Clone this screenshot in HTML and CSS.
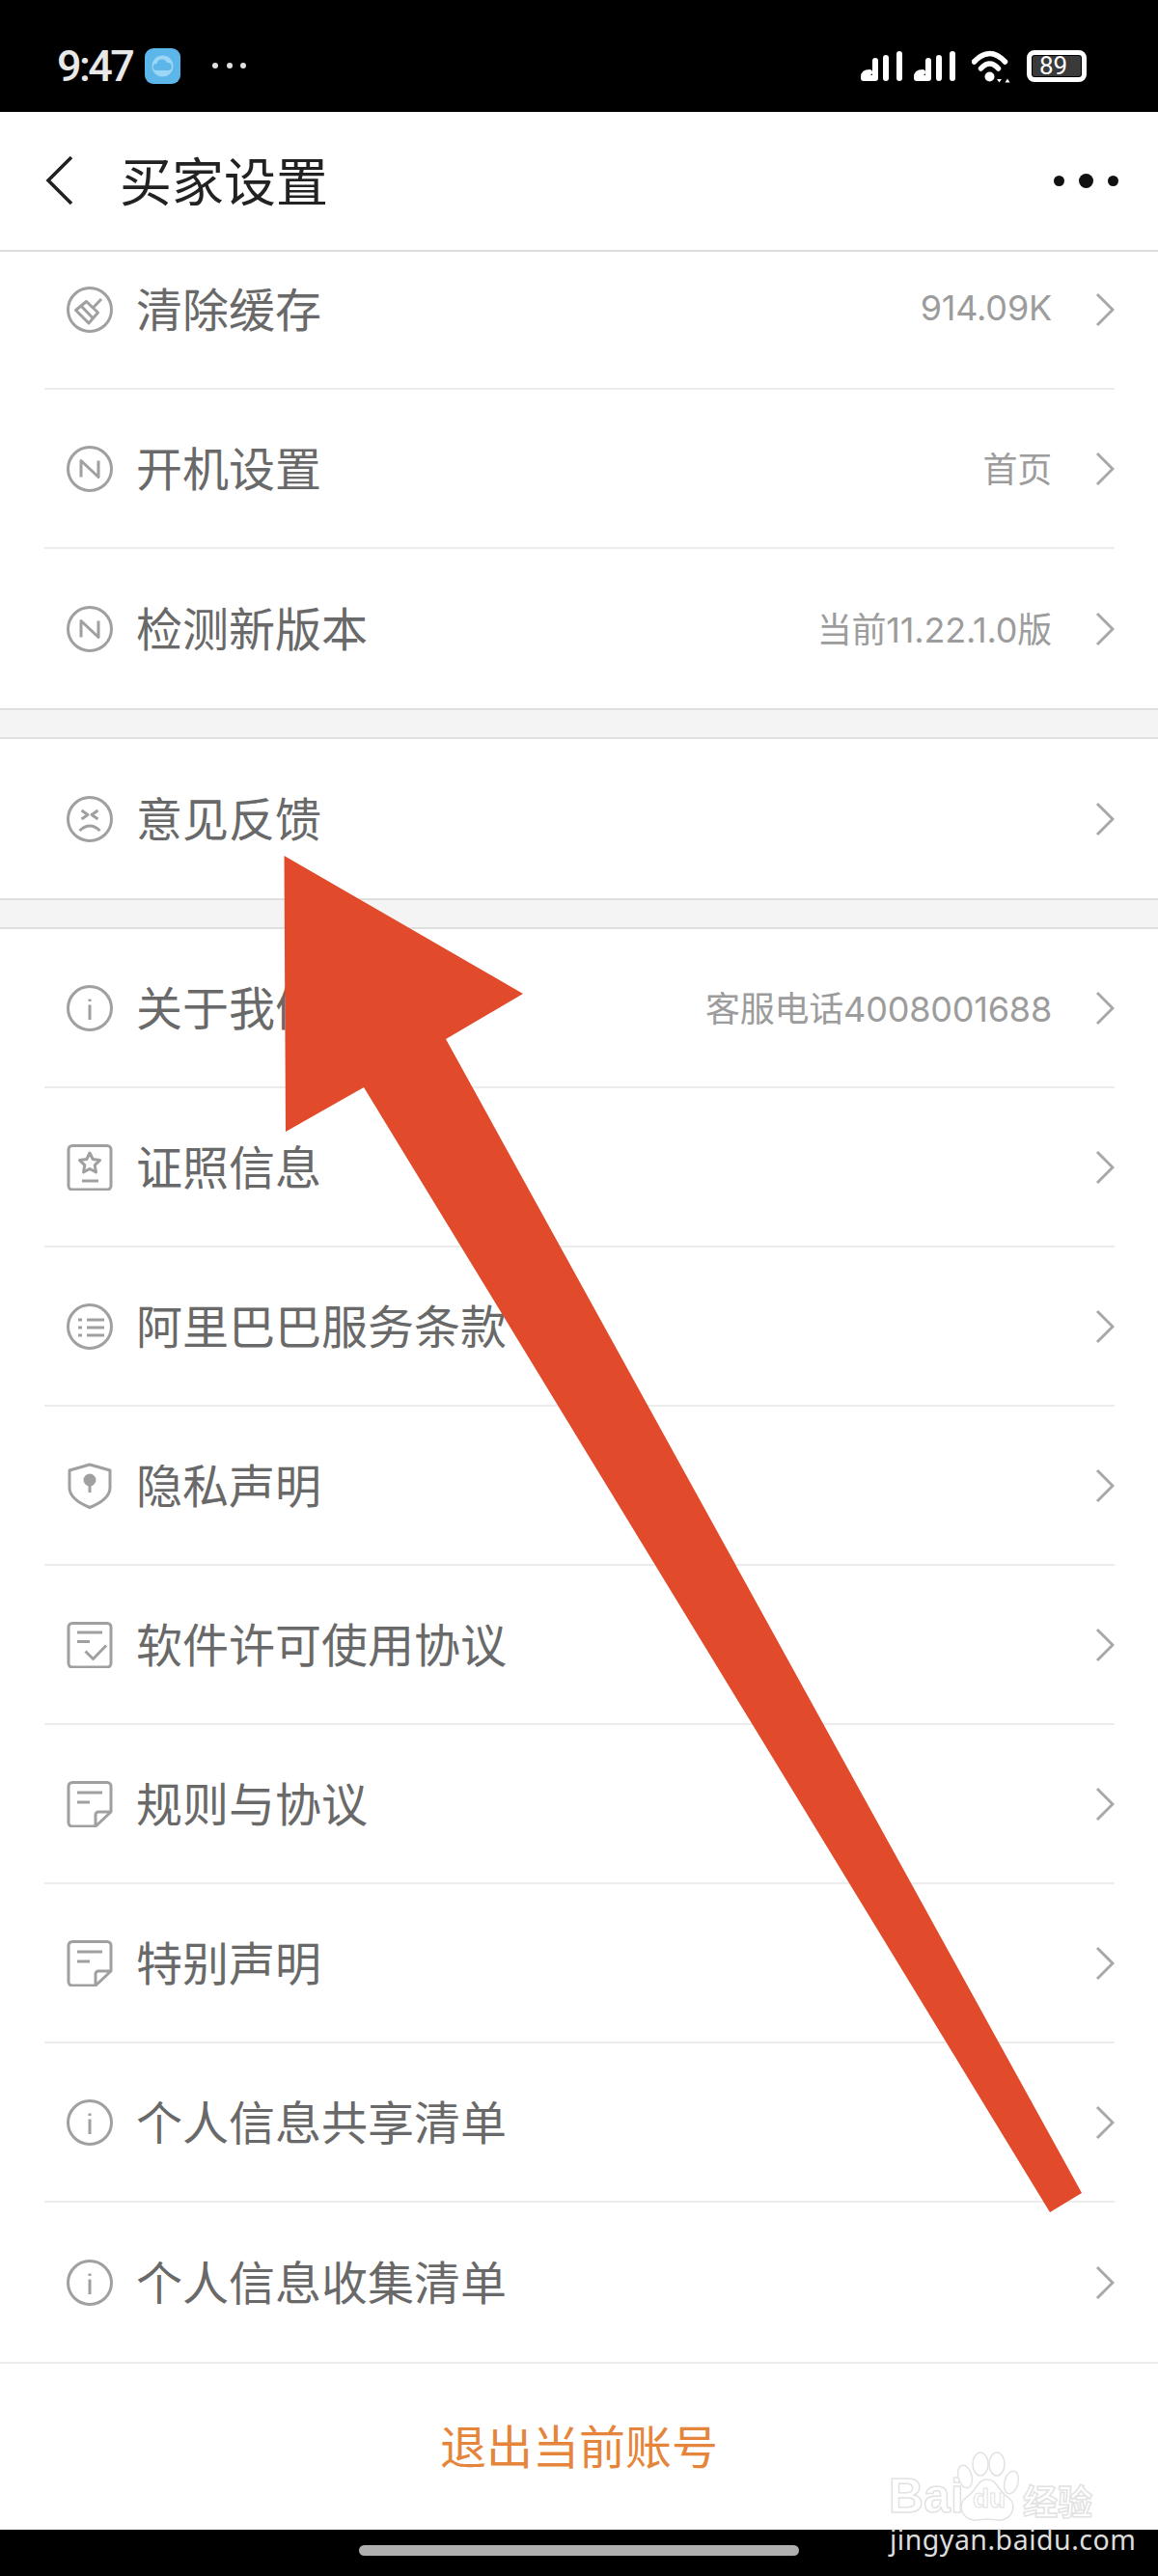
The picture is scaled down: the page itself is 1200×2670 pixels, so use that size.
FILE: index.html
```html
<!DOCTYPE html>
<html lang="zh-CN">
<head>
    <meta charset="UTF-8">
    <meta name="viewport" content="width=device-width, initial-scale=1.0">
    <title>买家设置</title>
    <link rel="stylesheet" href="styles.css">
</head>
<body>

    <!-- shared icons -->
    <svg class="defs" width="0" height="0">
        <defs>
            <symbol id="ic-chevron" viewBox="0 0 20 36">
                <path d="M2 2L18 18L2 34"/>
            </symbol>
            <symbol id="ic-broom" viewBox="0 0 48 48">
                <circle cx="24" cy="24" r="22.500"/>
                <path d="M36 13L28.300 21M20.500 15.500L32.500 27L23 38L9.500 24.500ZM15 20L27 32.500"/>
            </symbol>
            <symbol id="ic-n" viewBox="0 0 48 48">
                <circle cx="24" cy="24" r="22.500"/>
                <path d="M15 32.500V15.500L33 32.500V15.500"/>
            </symbol>
            <symbol id="ic-sad" viewBox="0 0 48 48">
                <circle cx="24" cy="24" r="22.500"/>
                <path d="M15.500 15L22 19.500L15.500 24M32.500 15L26 19.500L32.500 24M13.500 36Q24 26 34.500 36"/>
            </symbol>
            <symbol id="ic-info" viewBox="0 0 48 48">
                <circle cx="24" cy="24" r="22.500"/>
                <path d="M24 20.500V36M24 14.500V17"/>
            </symbol>
            <symbol id="ic-cert" viewBox="0 0 48 48">
                <rect x="2" y="1.500" width="44" height="45.500" rx="4"/>
                <path d="M24 9L27.200 15.500L34.500 16.600L29.200 21.700L30.500 28.900L24 25.500L17.500 28.900L18.800 21.700L13.500 16.600L20.800 15.500ZM16 38H33"/>
            </symbol>
            <symbol id="ic-list" viewBox="0 0 48 48">
                <circle cx="24" cy="24" r="22.500"/>
                <path d="M12 17H16M21 17H39M12 25H16M21 25H39M12 33H16M21 33H39"/>
            </symbol>
            <symbol id="ic-shield" viewBox="0 0 48 48">
                <path d="M24 2L45 8V26C45 35 35 42 24 46.500C13 42 3 35 3 26V8Z"/>
                <path d="M24 18V31"/>
                <circle class="solid" cx="24" cy="18" r="5"/>
            </symbol>
            <symbol id="ic-check" viewBox="0 0 48 48">
                <rect x="2" y="1.500" width="44" height="45.500" rx="4"/>
                <path d="M11 11H37M11 20.500H24M19.500 30.500L27.500 38.500L41 24.500"/>
            </symbol>
            <symbol id="ic-doc" viewBox="0 0 48 48">
                <path d="M30 47H6A4 4 0 0 1 2 43V5.500A4 4 0 0 1 6 1.500H42A4 4 0 0 1 46 5.500V32ZM46 32H33A3 3 0 0 0 30 35V47M11 12H37M11 22H24"/>
            </symbol>
        </defs>
    </svg>

    <!-- Status bar -->
    <div class="status-bar">
        <span class="time">9:47</span>
        <svg class="app-badge" viewBox="0 0 37 37">
            <rect width="37" height="37" rx="9" fill="#5cb6ea"/>
            <circle cx="18.500" cy="18.500" r="11" fill="#9bd6f5"/>
            <path d="M12 23a3.500 3.500 0 0 1 .5-7a5.500 5.500 0 0 1 10.500-1a4 4 0 0 1 1.500 8z" fill="#5cb6ea"/>
        </svg>
        <div class="status-dots"><i></i><i></i><i></i></div>

        <div class="status-right">
            <svg class="signal" viewBox="0 0 43 31">
                <path d="M3 28H15V10M3 27Q3 22 9 22"/>
                <path d="M26 7V28M40 3V28"/>
            </svg>
            <svg class="signal" viewBox="0 0 43 31">
                <path d="M3 28H15V10M3 27Q3 22 9 22"/>
                <path d="M26 7V28M40 3V28"/>
            </svg>
            <svg class="wifi" viewBox="0 0 40 36">
                <path d="M2.500 14Q18.500-3 34.500 14M9.500 21Q18.500 11 27.500 21"/>
                <circle cx="18.500" cy="29.500" r="5"/>
                <path class="tiny" d="M26 32h5l-2.500 3.500zM34.500 35.500l2.500-4l2.500 4z"/>
            </svg>
            <div class="battery"><span>89</span></div>
        </div>
    </div>

    <!-- Header -->
    <div class="top-bar">
        <svg class="back" viewBox="0 0 29 52"><path d="M27 2L3 26L27 50"/></svg>
        <h1>买家设置</h1>
        <div class="more"><i></i><i class="big"></i><i></i></div>
    </div>

    <div class="settings">
        <div class="group group-first">
            <div class="row">
                <svg class="icon"><use href="#ic-broom"/></svg>
                <span class="label">清除缓存</span>
                <span class="value">914.09K</span>
                <svg class="chevron"><use href="#ic-chevron"/></svg>
            </div>
            <div class="row">
                <svg class="icon"><use href="#ic-n"/></svg>
                <span class="label">开机设置</span>
                <span class="value">首页</span>
                <svg class="chevron"><use href="#ic-chevron"/></svg>
            </div>
            <div class="row">
                <svg class="icon"><use href="#ic-n"/></svg>
                <span class="label">检测新版本</span>
                <span class="value">当前11.22.1.0版</span>
                <svg class="chevron"><use href="#ic-chevron"/></svg>
            </div>
        </div>

        <div class="group-gap"></div>

        <div class="group">
            <div class="row">
                <svg class="icon"><use href="#ic-sad"/></svg>
                <span class="label">意见反馈</span>
                <svg class="chevron"><use href="#ic-chevron"/></svg>
            </div>
        </div>

        <div class="group-gap"></div>

        <div class="group">
            <div class="row">
                <svg class="icon"><use href="#ic-info"/></svg>
                <span class="label">关于我们</span>
                <span class="value">客服电话4008001688</span>
                <svg class="chevron"><use href="#ic-chevron"/></svg>
            </div>
            <div class="row">
                <svg class="icon"><use href="#ic-cert"/></svg>
                <span class="label">证照信息</span>
                <svg class="chevron"><use href="#ic-chevron"/></svg>
            </div>
            <div class="row">
                <svg class="icon"><use href="#ic-list"/></svg>
                <span class="label">阿里巴巴服务条款</span>
                <svg class="chevron"><use href="#ic-chevron"/></svg>
            </div>
            <div class="row">
                <svg class="icon"><use href="#ic-shield"/></svg>
                <span class="label">隐私声明</span>
                <svg class="chevron"><use href="#ic-chevron"/></svg>
            </div>
            <div class="row">
                <svg class="icon"><use href="#ic-check"/></svg>
                <span class="label">软件许可使用协议</span>
                <svg class="chevron"><use href="#ic-chevron"/></svg>
            </div>
            <div class="row">
                <svg class="icon"><use href="#ic-doc"/></svg>
                <span class="label">规则与协议</span>
                <svg class="chevron"><use href="#ic-chevron"/></svg>
            </div>
            <div class="row">
                <svg class="icon"><use href="#ic-doc"/></svg>
                <span class="label">特别声明</span>
                <svg class="chevron"><use href="#ic-chevron"/></svg>
            </div>
            <div class="row">
                <svg class="icon"><use href="#ic-info"/></svg>
                <span class="label">个人信息共享清单</span>
                <svg class="chevron"><use href="#ic-chevron"/></svg>
            </div>
            <div class="row">
                <svg class="icon"><use href="#ic-info"/></svg>
                <span class="label">个人信息收集清单</span>
                <svg class="chevron"><use href="#ic-chevron"/></svg>
            </div>
        </div>
    </div>

    <div class="logout"><span>退出当前账号</span></div>

    <!-- Navigation bar -->
    <div class="nav-bar"><div class="home-pill"></div></div>

    <!-- Annotation arrow drawn over the screenshot -->
    <svg class="arrow" viewBox="0 0 1200 2670">
        <polygon points="294.500,887 542,1030 462,1077 1121,2273 1088,2293 377,1127 296,1173"/>
    </svg>

    <!-- Watermark -->
    <div class="watermark">
        <span class="wm-bai">Bai</span>
        <svg class="wm-paw" viewBox="0 0 70 80">
            <ellipse cx="12" cy="27" rx="7" ry="12" transform="rotate(-15 12 27)"/>
            <ellipse cx="28" cy="14" rx="8" ry="12"/>
            <ellipse cx="45" cy="14" rx="8" ry="12"/>
            <ellipse cx="60" cy="33" rx="7" ry="12" transform="rotate(15 60 33)"/>
            <path d="M35 30C46 30 46 42 56 48C68 56 60 74 46 72C38 71 32 71 24 72C10 74 2 56 14 48C24 42 24 30 35 30Z"/>
        </svg>
        <span class="wm-du">du</span>
        <span class="wm-jy">经验</span>
        <span class="wm-url">jingyan.baidu.com</span>
    </div>

</body>
</html>
```

FILE: styles.css
```css
* {
    box-sizing: border-box;
}
body {
    margin: 0;
    width: 1200px;
    height: 2670px;
    position: relative;
    overflow: hidden;
    background-color: #ffffff;
    font-family: "Noto Sans CJK SC", "Noto Sans", sans-serif;
}
.defs {
    position: absolute;
}
i {
    display: block;
}

/* status bar */
.status-bar {
    height: 116px;
    background-color: #000000;
    display: flex;
    align-items: center;
    padding: 20px 74px 0 59px;
    color: #e8e8e8;
}
.time {
    font-family: Roboto, sans-serif;
    font-size: 45px;
    font-weight: 500;
    letter-spacing: -2.600px;
    width: 91px;
    line-height: 1;
}
.app-badge {
    width: 37px;
    height: 37px;
}
.status-dots {
    display: flex;
    gap: 8.500px;
    margin-left: 33px;
}
.status-dots i {
    width: 6px;
    height: 6px;
    border-radius: 50%;
    background-color: #e0e0e0;
}
.status-right {
    margin-left: auto;
    display: flex;
    align-items: center;
}
.signal {
    width: 43px;
    height: 31px;
    margin-right: 12px;
    fill: none;
    stroke: #ffffff;
    stroke-width: 6;
    stroke-linecap: round;
    stroke-linejoin: round;
}
.wifi {
    width: 40px;
    height: 36px;
    margin: 0 17px 0 5px;
    fill: none;
    stroke: #ffffff;
    stroke-width: 5.500;
    stroke-linecap: round;
}
.wifi circle,
.wifi .tiny {
    fill: #ffffff;
    stroke: none;
}
.battery {
    width: 62px;
    height: 33px;
    border: 5px solid #ffffff;
    border-radius: 8px;
    background-color: #3a3a3a;
    box-shadow: inset 0 0 0 1px #000000;
    color: #ffffff;
    font-family: Roboto, sans-serif;
    font-size: 26px;
    line-height: 23px;
    padding-left: 8px;
}

/* header */
.top-bar {
    height: 145px;
    border-bottom: 2px solid #dddddd;
    display: flex;
    align-items: center;
    padding: 0 41px 1px 47px;
}
.back {
    width: 29px;
    height: 52px;
    fill: none;
    stroke: #222222;
    stroke-width: 3.600;
}
.top-bar h1 {
    margin: 0 0 3px 48px;
    font-size: 54px;
    font-weight: 400;
    color: #222222;
    line-height: 1;
}
.more {
    margin-left: auto;
    display: flex;
    align-items: center;
    gap: 15px;
}
.more i {
    width: 11px;
    height: 11px;
    border-radius: 50%;
    background-color: #111111;
}
.more i.big {
    width: 15px;
    height: 15px;
}

/* settings list, scrolled a little past the first row */
.settings {
    height: 2187px;
    overflow: hidden;
}
.group-first {
    margin-top: -22px;
}
.group-gap {
    height: 32px;
    background-color: #f4f4f4;
    border-top: 2px solid #dfdfdf;
    border-bottom: 2px solid #dfdfdf;
}
.row {
    height: 165px;
    margin: 0 45px 0 46px;
    padding-left: 23px;
    border-bottom: 2px solid #ececec;
    display: flex;
    align-items: center;
}
.row:last-child {
    border-bottom: none;
}
.icon {
    width: 48px;
    height: 48px;
    flex-shrink: 0;
    fill: none;
    stroke: #a0a0a0;
    stroke-width: 3;
    stroke-linejoin: round;
}
.solid {
    fill: #a0a0a0;
}
.label {
    margin-left: 24px;
    padding-bottom: 6px;
    font-size: 48px;
    line-height: 1;
    color: #696969;
}
.value {
    margin-left: auto;
    padding-bottom: 4px;
    font-family: Inter, "Noto Sans CJK SC", sans-serif;
    font-size: 36px;
    letter-spacing: -0.200px;
    color: #9c9c9c;
}
.chevron {
    width: 20px;
    height: 36px;
    margin-left: 45px;
    flex-shrink: 0;
    fill: none;
    stroke: #a8a8a8;
    stroke-width: 3;
}
.row .label + .chevron {
    margin-left: auto;
}

/* footer */
.logout {
    height: 174px;
    border-top: 2px solid #ececec;
    display: flex;
    align-items: center;
    justify-content: center;
    font-size: 48px;
    color: #e5853b;
}
.logout span {
    padding-bottom: 6px;
}
.nav-bar {
    height: 48px;
    background-color: #000000;
    padding-top: 16px;
    display: flex;
    justify-content: center;
}
.home-pill {
    width: 456px;
    height: 11px;
    border-radius: 6px;
    background-color: #b0b0b0;
}

/* overlays */
.arrow {
    position: absolute;
    left: 0;
    top: 0;
    width: 1200px;
    height: 2670px;
    fill: #e14a2a;
}
.watermark {
    position: absolute;
    left: 920px;
    top: 2540px;
    width: 220px;
    height: 105px;
}
.wm-bai,
.wm-du,
.wm-jy {
    position: absolute;
    color: #ffffff;
    -webkit-text-stroke: 1.500px #e2e2e2;
    line-height: 1;
}
.wm-bai {
    left: 1px;
    top: 22px;
    font-family: "Liberation Sans", sans-serif;
    font-size: 50px;
    font-weight: 700;
    letter-spacing: 0;
}
.wm-paw {
    position: absolute;
    left: 68px;
    top: 0;
    width: 70px;
    height: 80px;
    fill: #ffffff;
    stroke: #e2e2e2;
    stroke-width: 1.500;
}
.wm-du {
    left: 88px;
    top: 36px;
    font-family: "Liberation Sans", sans-serif;
    font-size: 28px;
    font-weight: 700;
    -webkit-text-stroke-width: 1px;
}
.wm-jy {
    left: 140px;
    top: 33px;
    font-size: 36px;
    font-weight: 700;
}
.wm-url {
    position: absolute;
    left: 2px;
    top: 78px;
    font-family: "Noto Sans", sans-serif;
    font-size: 28.500px;
    line-height: 1;
    color: #dddddd;
    letter-spacing: 0.500px;
    white-space: nowrap;
}
```
